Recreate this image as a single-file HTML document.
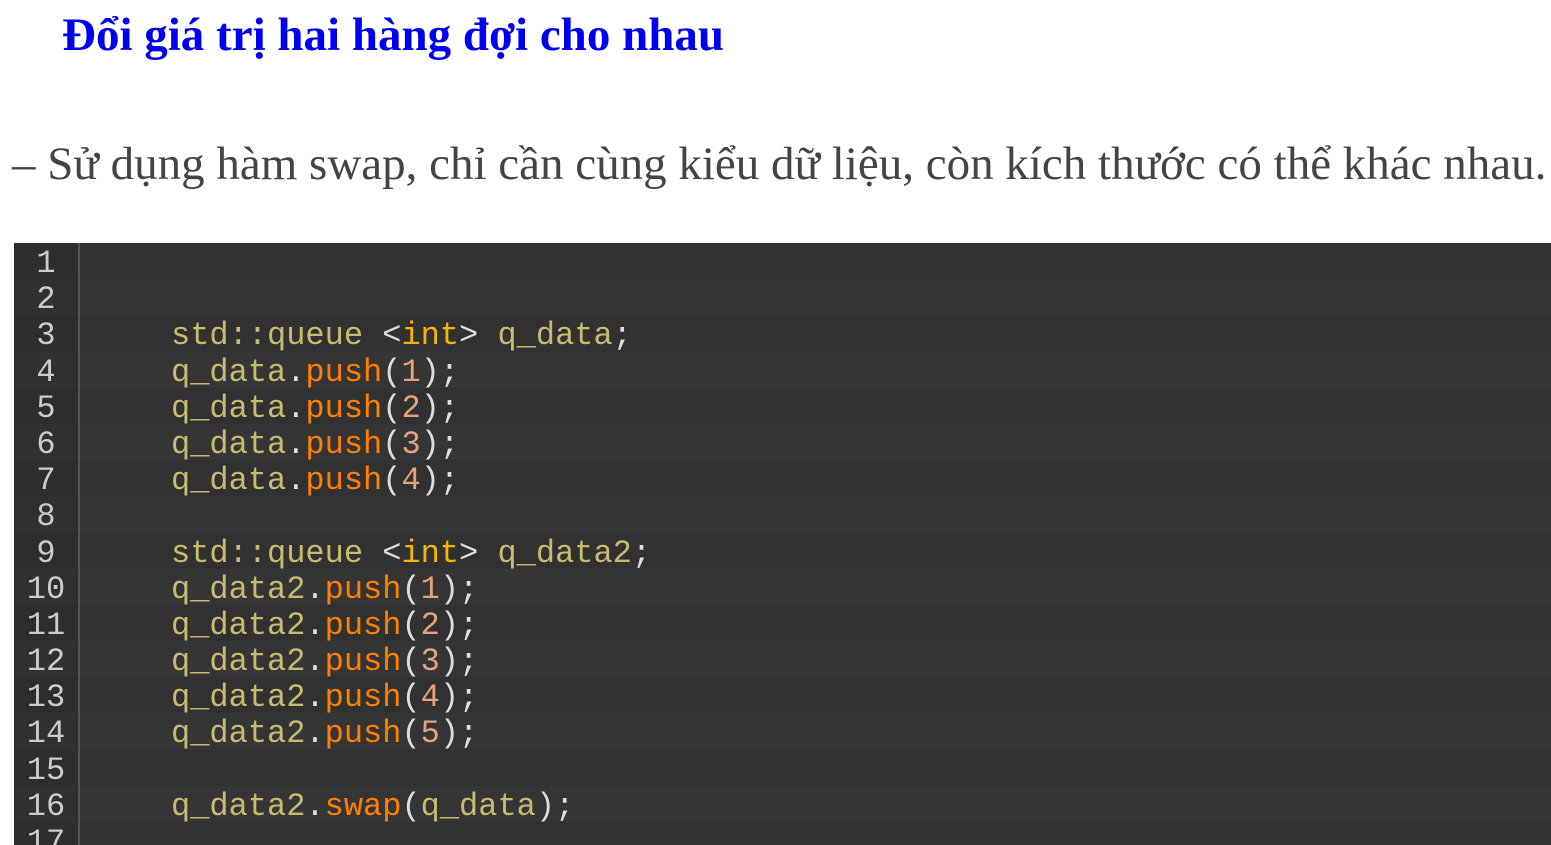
<!DOCTYPE html>
<html><head><meta charset="utf-8"><style>
body{margin:0;background:#fff;width:1551px;height:845px;overflow:hidden;position:relative}
h1{position:absolute;left:62px;top:8px;margin:0;font:bold 47px "Liberation Serif",serif;color:#0000ee;white-space:nowrap}
p{position:absolute;left:12px;top:137px;margin:0;font:47px "Liberation Serif",serif;color:#444;white-space:nowrap}
.code{position:absolute;left:14px;top:243px;right:0;bottom:0;background:#333;overflow:hidden}
.row{height:36.2px;display:flex;font:32px/36.2px "Liberation Mono",monospace}
.row:nth-child(odd){background:#313131}
.row:nth-child(even){background:#353535}
.n{width:66px;text-align:center;color:#ccc;background:rgba(0,0,0,0.08);border-right:2px solid #555;padding-top:3px;box-sizing:border-box}
.c{padding-left:91px;color:#c8bb6f;white-space:pre;padding-top:3px}
.k{color:#f5b400}.f{color:#ff7f00}.d{color:#e8a27a}.p{color:#ddd}
</style></head><body>
<h1>Đổi giá trị hai hàng đợi cho nhau</h1>
<p>– Sử dụng hàm swap, chỉ cần cùng kiểu dữ liệu, còn kích thước có thể khác nhau.</p>
<div class="code">
<div class="row"><div class="n">1</div><div class="c"></div></div>
<div class="row"><div class="n">2</div><div class="c"></div></div>
<div class="row"><div class="n">3</div><div class="c">std::queue <span class="p">&lt;</span><span class="k">int</span><span class="p">&gt;</span> q_data<span class="p">;</span></div></div>
<div class="row"><div class="n">4</div><div class="c">q_data<span class="p">.</span><span class="f">push</span><span class="p">(</span><span class="d">1</span><span class="p">);</span></div></div>
<div class="row"><div class="n">5</div><div class="c">q_data<span class="p">.</span><span class="f">push</span><span class="p">(</span><span class="d">2</span><span class="p">);</span></div></div>
<div class="row"><div class="n">6</div><div class="c">q_data<span class="p">.</span><span class="f">push</span><span class="p">(</span><span class="d">3</span><span class="p">);</span></div></div>
<div class="row"><div class="n">7</div><div class="c">q_data<span class="p">.</span><span class="f">push</span><span class="p">(</span><span class="d">4</span><span class="p">);</span></div></div>
<div class="row"><div class="n">8</div><div class="c"></div></div>
<div class="row"><div class="n">9</div><div class="c">std::queue <span class="p">&lt;</span><span class="k">int</span><span class="p">&gt;</span> q_data2<span class="p">;</span></div></div>
<div class="row"><div class="n">10</div><div class="c">q_data2<span class="p">.</span><span class="f">push</span><span class="p">(</span><span class="d">1</span><span class="p">);</span></div></div>
<div class="row"><div class="n">11</div><div class="c">q_data2<span class="p">.</span><span class="f">push</span><span class="p">(</span><span class="d">2</span><span class="p">);</span></div></div>
<div class="row"><div class="n">12</div><div class="c">q_data2<span class="p">.</span><span class="f">push</span><span class="p">(</span><span class="d">3</span><span class="p">);</span></div></div>
<div class="row"><div class="n">13</div><div class="c">q_data2<span class="p">.</span><span class="f">push</span><span class="p">(</span><span class="d">4</span><span class="p">);</span></div></div>
<div class="row"><div class="n">14</div><div class="c">q_data2<span class="p">.</span><span class="f">push</span><span class="p">(</span><span class="d">5</span><span class="p">);</span></div></div>
<div class="row"><div class="n">15</div><div class="c"></div></div>
<div class="row"><div class="n">16</div><div class="c">q_data2<span class="p">.</span><span class="f">swap</span><span class="p">(</span>q_data<span class="p">);</span></div></div>
<div class="row"><div class="n">17</div><div class="c"></div></div>
</div>
</body></html>
